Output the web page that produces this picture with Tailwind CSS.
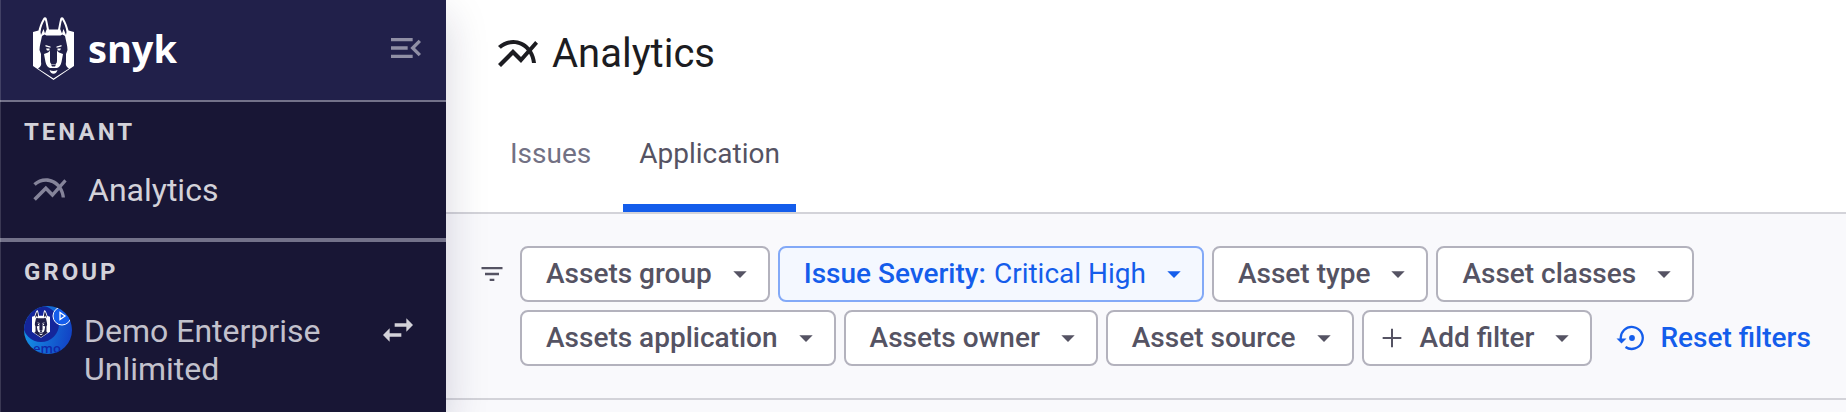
<!DOCTYPE html>
<html lang="en">
<head>
<meta charset="utf-8">
<title>Analytics</title>
<script src="https://cdn.jsdelivr.net/npm/@tailwindcss/browser@4"></script>
</head>
<body class="font-[Roboto,sans-serif] bg-white">
<svg class="hidden" aria-hidden="true">
  <symbol id="chart" viewBox="0 0 24 24"><path d="M22 6.92l-1.41-1.41-2.85 3.21C15.68 6.4 12.83 5 9.61 5 6.72 5 4.07 6.16 2 8l1.42 1.42C5.12 7.93 7.27 7 9.61 7c2.74 0 5.09 1.26 6.77 3.24l-2.88 3.24-4-4L2 16.99l1.5 1.5 6-6.01 4 4 4.05-4.55c.75 1.35 1.25 2.9 1.44 4.55H21c-.22-2.3-.95-4.39-2.04-6.14L22 6.92z"/></symbol>
  <symbol id="caret" viewBox="0 0 24 24"><path d="M7 10l5 5 5-5z"/></symbol>
  <symbol id="dog" viewBox="0 0 41 63">
    <path fill="#fff" d="M0 15L5.500 13.500C6.500 9 9 3 11 .5Q12.500 -.3 13.500 1C14.500 4 15 8 16 12.500H25C26 8 26.500 4 27.500 1Q28.500 -.3 30 .5C32 3 34.500 9 35.500 13.500L41 15V49L20.500 63 0 49Z"/>
    <path fill="#21204a" d="M7.500 15C8 10 10 6 11.900 2.800C13 6 13.200 9 13.800 12L12 16.500 10.500 12 8 18Z M33.500 15C33 10 31 6 29.100 2.800C28 6 27.800 9 27.200 12L29 16.500 30.500 12 33 18Z"/>
    <path fill="#21204a" d="M9 19L11.500 17.500C13.500 19 16 18.500 20.500 18.500S27.500 19 29.500 17.500L32 19C33 24 34.500 29 34.500 33L33 37V45C32 49 35 51 36 51.500L20.500 61.500 5 51.500C6 51 9 49 8 45V37L6.500 33C6.500 29 8 24 9 19Z"/>
    <path fill="#fff" d="M12.500 28L17.500 29.500 17.500 30.700 12.500 29.500Z M13 31.500H16.500V33.500H14Z M28.500 28L23.500 29.500 23.500 30.700 28.500 29.500Z M28 31.500H24.500V33.500H27Z M11 37L15 35.500 17 33.800V44Q17 46 18.300 47H22.700Q24 46 24 44V33.800L26 35.500 30 37 28.500 45Q27.500 50 24 51H17Q13.500 50 12.500 45Z M16.500 53Q20.500 55 24.500 53 23.500 56.500 20.500 56.700 17.500 56.500 16.500 53Z"/>
    <path fill="#21204a" d="M18 47.500H23L22 49.500H19Z"/>
  </symbol>
</svg>
<div class="flex min-h-screen">
  <aside class="relative z-10 w-[446px] shrink-0 bg-[#181635] text-[#d3d2d9] shadow-[0_16px_40px_rgba(28,24,64,0.18)] before:absolute before:inset-y-0 before:left-0 before:w-px before:bg-white/15">
    <div class="flex h-[102px] items-center border-b-2 border-[#73728a] bg-[#21204a] pr-5 pb-1 pl-8">
      <a href="#" class="flex items-center gap-3.5 pl-px text-white">
        <svg class="h-[63px] w-[41px]" aria-hidden="true"><use href="#dog"/></svg>
        <span class="font-['Open_Sans'] text-[38px] leading-none font-bold">snyk</span>
      </a>
      <button class="ml-auto" aria-label="Collapse menu"><svg class="size-10 fill-[#908fa5]" viewBox="0 0 24 24"><path d="M3 18h13v-2H3v2zM3 6v2h13V6H3zm0 7h10v-2H3v2zm18 2.590L17.420 12 21 8.410 19.590 7l-5 5 5 5L21 15.590z"/></svg></button>
    </div>
    <section class="h-[140px] border-b-4 border-[#73728a] pt-3.5 pl-6">
      <h2 class="text-2xl leading-8 font-bold tracking-[3px]">TENANT</h2>
      <a href="#" class="mt-[22px] flex items-center gap-[18px] pl-1.5 text-[32px] leading-10"><svg class="size-10 fill-[#85849a]"><use href="#chart"/></svg>Analytics</a>
    </section>
    <section class="pt-3.5 pr-7 pl-6">
      <h2 class="text-2xl leading-8 font-bold tracking-[3px]">GROUP</h2>
      <div class="mt-[18px] flex items-start">
        <svg class="size-12 shrink-0 overflow-visible" viewBox="0 0 48 48" role="img" aria-label="Demo group">
          <defs><linearGradient id="g" x1="0" y1="0.500" x2="1" y2="0.700"><stop stop-color="#1593e6"/><stop offset="1" stop-color="#1240c4"/></linearGradient><clipPath id="c"><circle cx="24" cy="24" r="24"/></clipPath></defs>
          <g clip-path="url(#c)"><rect width="48" height="48" fill="url(#g)"/><circle cx="17" cy="18" r="18" fill="#14259a"/><text x="9" y="47" font-family="Open Sans" font-size="13" font-weight="600" fill="#1027a8">emo</text><svg x="8" y="4" width="18" height="28"><use href="#dog"/></svg><circle cx="38" cy="10" r="9" fill="#145deb" stroke="#fff"/><path d="M36 6.500v7l5-3.500z" fill="none" stroke="#fff" stroke-width="1.300"/></g>
        </svg>
        <p class="mt-1.5 ml-3 flex-1 text-[32px] leading-[38px] text-[#c2c1cc]">Demo Enterprise Unlimited</p>
        <button class="mt-1" aria-label="Switch group"><svg class="size-10 fill-[#d3d2d9]" viewBox="0 0 24 24"><path d="M6.990 11L3 15l3.990 4v-3H14v-2H6.990v-3zM21 9l-3.990-4v3H10v2h7.010v3L21 9z"/></svg></button>
      </div>
    </section>
  </aside>
  <main class="min-w-0 flex-1 bg-[#f9f9fc] text-[#555363]">
    <header class="border-b-2 border-[#d3d3d9] bg-white pt-7 pl-12">
      <h1 class="flex items-center gap-2.5 text-[40px] leading-[52px] text-[#1c1c21]"><svg class="size-12 fill-[#1c1c21]"><use href="#chart"/></svg>Analytics</h1>
      <nav class="mt-7 flex gap-4 text-[28px] leading-10">
        <a href="#" class="border-b-8 border-transparent px-4 pt-[26px] pb-[30px] text-[#727184]">Issues</a>
        <a href="#" aria-current="page" class="border-b-8 border-[#145deb] px-4 pt-[26px] pb-[30px]">Application</a>
      </nav>
    </header>
    <div class="flex gap-3.5 border-b-2 border-[#d3d3d9] py-8 pr-6 pl-8">
      <svg class="mt-3.5 size-7 shrink-0 fill-[#555363]" viewBox="0 0 24 24" aria-hidden="true"><path d="M10 18h4v-2h-4v2zM3 6v2h18V6H3zm3 7h12v-2H6v2z"/></svg>
      <div class="flex flex-wrap gap-2 text-[28px] leading-[52px] font-medium">
        <button class="flex items-center gap-3 rounded-lg border-2 border-[#b3b2bd] bg-white pr-3 pl-6">Assets group<svg class="size-8 fill-current"><use href="#caret"/></svg></button>
        <button class="flex items-center gap-3 rounded-lg border-2 border-[#83a9f7] bg-[#f4f8ff] pr-3 pl-6 text-[#145deb]"><span class="flex gap-2"><span>Issue Severity:</span><span class="font-normal">Critical High</span></span><svg class="size-8 fill-current"><use href="#caret"/></svg></button>
        <button class="flex items-center gap-3 rounded-lg border-2 border-[#b3b2bd] bg-white pr-3 pl-6">Asset type<svg class="size-8 fill-current"><use href="#caret"/></svg></button>
        <button class="flex items-center gap-3 rounded-lg border-2 border-[#b3b2bd] bg-white pr-3 pl-6">Asset classes<svg class="size-8 fill-current"><use href="#caret"/></svg></button>
        <button class="flex items-center gap-3 rounded-lg border-2 border-[#b3b2bd] bg-white pr-3 pl-6">Assets application<svg class="size-8 fill-current"><use href="#caret"/></svg></button>
        <button class="flex items-center gap-3 rounded-lg border-2 border-[#b3b2bd] bg-white pr-3 pl-6">Assets owner<svg class="size-8 fill-current"><use href="#caret"/></svg></button>
        <button class="flex items-center gap-3 rounded-lg border-2 border-[#b3b2bd] bg-white pr-3 pl-6">Asset source<svg class="size-8 fill-current"><use href="#caret"/></svg></button>
        <button class="flex items-center gap-3 rounded-lg border-2 border-[#b3b2bd] bg-white pr-3 pl-3"><svg class="size-8 fill-current" viewBox="0 0 24 24"><path d="M19 12.750h-6.250V19h-1.500v-6.250H5v-1.500h6.250V5h1.500v6.250H19z"/></svg>Add filter<svg class="size-8 fill-current"><use href="#caret"/></svg></button>
        <button class="flex items-center gap-4 pl-4 text-[#145deb]"><svg class="h-8 w-7" viewBox="0 0 28 32"><path d="M4.800 17A11 11 0 1 1 9.500 25" fill="none" stroke="currentColor" stroke-width="2.300"/><path d="M.5 16.500h10L5.500 21.500z" fill="currentColor"/><circle cx="16" cy="16" r="2.900" fill="currentColor"/></svg>Reset filters</button>
      </div>
    </div>
  </main>
</div>
</body>
</html>
